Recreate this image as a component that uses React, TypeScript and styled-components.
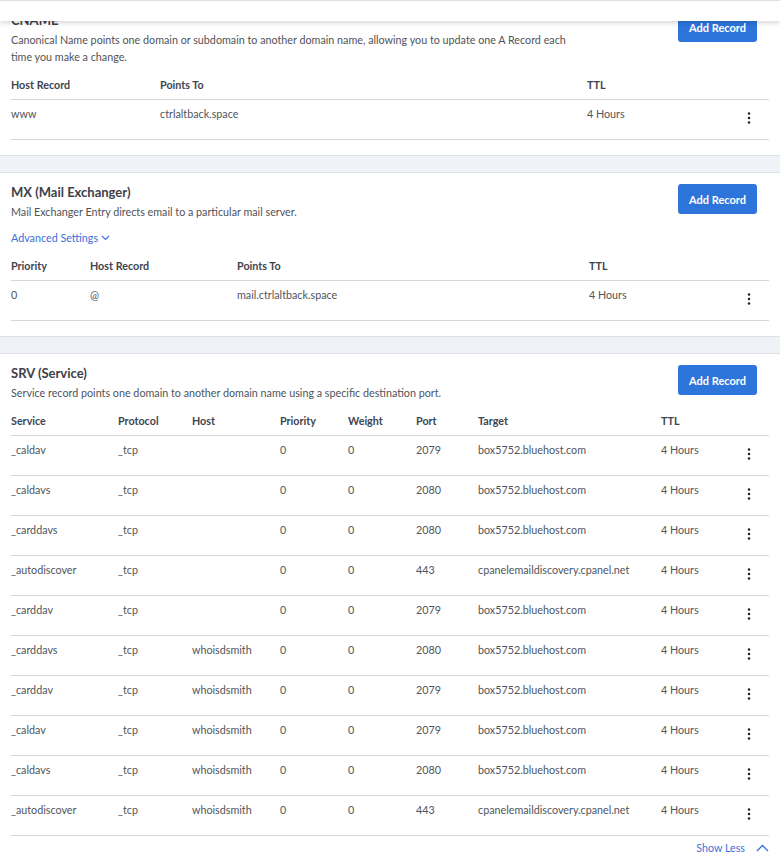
import React from "react";
import styled, { createGlobalStyle } from "styled-components";

const GlobalStyle = createGlobalStyle`
  html, body { margin: 0; padding: 0; }
  body {
    background: #eff2f6;
    font-family: Lato, "Open Sans", Arial, sans-serif;
    color: #4f5358;
    -webkit-font-smoothing: antialiased;
  }
  * { box-sizing: border-box; }
`;

const TopBar = styled.div`
  position: fixed;
  top: 0;
  left: 0;
  right: 0;
  height: 21px;
  background: #fff;
  border-top: 1px solid #dcdfe3;
  box-shadow: 0 2px 5px rgba(0, 0, 0, 0.16);
  z-index: 10;
`;

const Page = styled.div`
  display: flex;
  flex-direction: column;
  gap: 16px;
  padding-bottom: 40px;
`;

const Section = styled.section`
  background: #fff;
  border-top: 1px solid #dde1e7;
  border-bottom: 1px solid #dde1e7;
  padding: 11px 11px 15px;
`;

const SectionHead = styled.div`
  display: flex;
  justify-content: space-between;
  align-items: flex-start;
`;

const HeadText = styled.div`
  display: flex;
  flex-direction: column;
  gap: 2px;
`;

const Title = styled.h2`
  margin: 0;
  font-size: 13px;
  line-height: 17px;
  font-weight: 700;
  color: #3d4148;
`;

const Desc = styled.p`
  margin: 0;
  font-size: 10.75px;
  line-height: 17px;
  color: #4f5358;
  max-width: 570px;
`;

const AddButton = styled.button`
  width: 79px;
  height: 30px;
  margin-right: 12px;
  flex: none;
  border: none;
  border-radius: 3px;
  background: #2e75db;
  color: #fff;
  font-family: Lato, Arial, sans-serif;
  font-weight: 700;
  font-size: 11px;
  padding: 0;
  cursor: pointer;
`;

const Link = styled.a`
  display: flex;
  align-items: center;
  gap: 3px;
  font-size: 10.75px;
  line-height: 17px;
  height: 17px;
  color: #3b6fd9;
  text-decoration: none;
  cursor: pointer;
`;

const AdvancedRow = styled.div`
  display: flex;
  margin-top: 9px;
  font-size: 11px;
  line-height: 17px;
`;

const Table = styled.div<{ $cols: string }>`
  display: grid;
  grid-template-columns: ${(p) => p.$cols};
`;

const HeadCell = styled.div`
  font-size: 10.75px;
  line-height: 17px;
  font-weight: 700;
  color: #3f4550;
  padding: 11px 0 6px;
  border-bottom: 1px solid #d4d9e0;
  white-space: nowrap;
`;

const Cell = styled.div`
  font-size: 10.75px;
  line-height: 17px;
  color: #50555b;
  height: 40px;
  padding-top: 5px;
  border-bottom: 1px solid #d4d9e0;
  white-space: nowrap;
`;

const MenuCell = styled.div`
  height: 40px;
  border-bottom: 1px solid #d4d9e0;
  display: flex;
  align-items: center;
  justify-content: center;
  padding-bottom: 4px;
`;

const Footer = styled.div`
  display: flex;
  justify-content: flex-end;
  margin-top: 3px;
  font-size: 11px;
  line-height: 17px;
`;

const Kebab = () => (
  <svg width="4" height="12" viewBox="0 0 4 12">
    <circle cx="2" cy="1.4" r="1.25" fill="#222" />
    <circle cx="2" cy="6" r="1.25" fill="#222" />
    <circle cx="2" cy="10.6" r="1.25" fill="#222" />
  </svg>
);

const ChevronDown = () => (
  <svg width="9" height="6" viewBox="0 0 9 6">
    <path d="M1 1l3.5 3.5L8 1" fill="none" stroke="#3b6fd9" strokeWidth="1.1" />
  </svg>
);

const ChevronUp = () => (
  <svg width="13" height="8" viewBox="0 0 13 8" style={{ marginLeft: 8 }}>
    <path d="M1 7l5.5-5.5L12 7" fill="none" stroke="#3b6fd9" strokeWidth="1.3" />
  </svg>
);

type Row = string[];

const RecordTable = ({ cols, heads, rows }: { cols: string; heads: string[]; rows: Row[] }) => (
  <Table $cols={cols}>
    {heads.map((h, i) => (
      <HeadCell key={"h" + i}>{h}</HeadCell>
    ))}
    <HeadCell />
    {rows.map((r, ri) => (
      <React.Fragment key={ri}>
        {r.map((c, ci) => (
          <Cell key={ci}>{c}</Cell>
        ))}
        <MenuCell>
          <Kebab />
        </MenuCell>
      </React.Fragment>
    ))}
  </Table>
);

const srvRows: Row[] = [
  ["_caldav", "_tcp", "", "0", "0", "2079", "box5752.bluehost.com", "4 Hours"],
  ["_caldavs", "_tcp", "", "0", "0", "2080", "box5752.bluehost.com", "4 Hours"],
  ["_carddavs", "_tcp", "", "0", "0", "2080", "box5752.bluehost.com", "4 Hours"],
  ["_autodiscover", "_tcp", "", "0", "0", "443", "cpanelemaildiscovery.cpanel.net", "4 Hours"],
  ["_carddav", "_tcp", "", "0", "0", "2079", "box5752.bluehost.com", "4 Hours"],
  ["_carddavs", "_tcp", "whoisdsmith", "0", "0", "2080", "box5752.bluehost.com", "4 Hours"],
  ["_carddav", "_tcp", "whoisdsmith", "0", "0", "2079", "box5752.bluehost.com", "4 Hours"],
  ["_caldav", "_tcp", "whoisdsmith", "0", "0", "2079", "box5752.bluehost.com", "4 Hours"],
  ["_caldavs", "_tcp", "whoisdsmith", "0", "0", "2080", "box5752.bluehost.com", "4 Hours"],
  ["_autodiscover", "_tcp", "whoisdsmith", "0", "0", "443", "cpanelemaildiscovery.cpanel.net", "4 Hours"],
];

export default function App() {
  return (
    <>
      <GlobalStyle />
      <TopBar />
      <Page>
        <Section>
          <SectionHead>
            <HeadText>
              <Title>CNAME</Title>
              <Desc>
                Canonical Name points one domain or subdomain to another domain name, allowing you to update one A Record each time you make a change.
              </Desc>
            </HeadText>
            <AddButton>Add Record</AddButton>
          </SectionHead>
          <RecordTable
            cols="149px 427px 1fr 40px"
            heads={["Host Record", "Points To", "TTL"]}
            rows={[["www", "ctrlaltback.space", "4 Hours"]]}
          />
        </Section>

        <Section>
          <SectionHead>
            <HeadText>
              <Title>MX (Mail Exchanger)</Title>
              <Desc>Mail Exchanger Entry directs email to a particular mail server.</Desc>
            </HeadText>
            <AddButton>Add Record</AddButton>
          </SectionHead>
          <AdvancedRow>
            <Link>
              Advanced Settings <ChevronDown />
            </Link>
          </AdvancedRow>
          <RecordTable
            cols="79px 147px 352px 1fr 40px"
            heads={["Priority", "Host Record", "Points To", "TTL"]}
            rows={[["0", "@", "mail.ctrlaltback.space", "4 Hours"]]}
          />
        </Section>

        <Section>
          <SectionHead>
            <HeadText>
              <Title>SRV (Service)</Title>
              <Desc>Service record points one domain to another domain name using a specific destination port.</Desc>
            </HeadText>
            <AddButton>Add Record</AddButton>
          </SectionHead>
          <RecordTable
            cols="107px 74px 88px 68px 68px 62px 183px 1fr 40px"
            heads={["Service", "Protocol", "Host", "Priority", "Weight", "Port", "Target", "TTL"]}
            rows={srvRows}
          />
          <Footer>
            <Link>
              Show Less <ChevronUp />
            </Link>
          </Footer>
        </Section>
      </Page>
    </>
  );
}
